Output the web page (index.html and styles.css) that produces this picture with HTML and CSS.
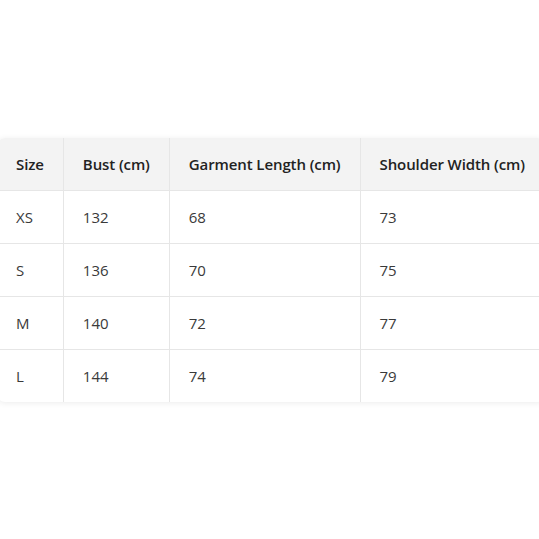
FILE: index.html
```html
<!DOCTYPE html>
<html lang="en">
<head>
<meta charset="utf-8">
<title>Size chart</title>
<link rel="stylesheet" href="styles.css">
</head>
<body>
<div class="wrap">
  <table class="size-table">
    <thead>
      <tr><th>Size</th><th>Bust (cm)</th><th>Garment Length (cm)</th><th>Shoulder Width (cm)</th></tr>
    </thead>
    <tbody>
      <tr><td>XS</td><td>132</td><td>68</td><td>73</td></tr>
      <tr><td>S</td><td>136</td><td>70</td><td>75</td></tr>
      <tr><td>M</td><td>140</td><td>72</td><td>77</td></tr>
      <tr><td>L</td><td>144</td><td>74</td><td>79</td></tr>
    </tbody>
  </table>
</div>
</body>
</html>
```
FILE: styles.css
```css
html, body {
  margin: 0;
  padding: 0;
  background: #ffffff;
}
body {
  font-family: "Open Sans", "Noto Sans", sans-serif;
  overflow: hidden;
}
.wrap {
  height: 539px;
  width: 539px;
  display: flex;
  align-items: center;
  justify-content: flex-start;
}
.size-table {
  flex: none;
  margin-left: -3px;
  border-collapse: separate;
  border-spacing: 0;
  border-radius: 8px;
  overflow: hidden;
  box-shadow: 0 1px 6px rgba(0, 0, 0, 0.08);
  background: #fff;
  font-size: 15px;
  color: #333;
}
.size-table th,
.size-table td {
  height: 52px;
  padding: 0 19px;
  text-align: left;
  white-space: nowrap;
  border-bottom: 1px solid #e6e6e6;
  border-right: 1px solid #e6e6e6;
}
.size-table tbody tr:last-child td {
  border-bottom: none;
}
.size-table th {
  background: #f3f3f3;
  font-weight: 600;
  letter-spacing: -0.1px;
  color: #222;
}
.size-table td {
  font-weight: 400;
  color: #3a3a3a;
}
```
